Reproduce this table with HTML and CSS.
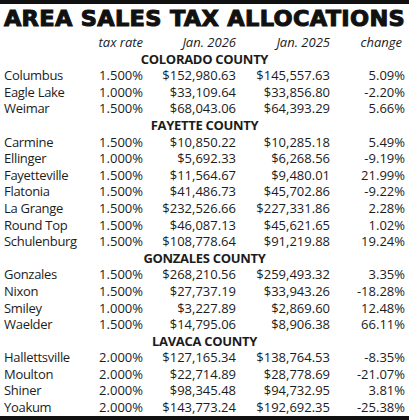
FILE: index.html
```html
<!DOCTYPE html>
<html>
<head>
<meta charset="utf-8">
<link rel="stylesheet" href="styles.css">
</head>
<body>
<div class="frame">
  <h1 class="title"><span class="title-text">AREA SALES TAX ALLOCATIONS</span></h1>
  <div class="table">
    <div class="row head"><span></span><span>tax rate</span><span>Jan. 2026</span><span>Jan. 2025</span><span>change</span></div>
    <div class="county">COLORADO COUNTY</div>
    <div class="row"><span>Columbus</span><span>1.500%</span><span>$152,980.63</span><span>$145,557.63</span><span>5.09%</span></div>
    <div class="row"><span>Eagle Lake</span><span>1.000%</span><span>$33,109.64</span><span>$33,856.80</span><span>-2.20%</span></div>
    <div class="row"><span>Weimar</span><span>1.500%</span><span>$68,043.06</span><span>$64,393.29</span><span>5.66%</span></div>
    <div class="county">FAYETTE COUNTY</div>
    <div class="row"><span>Carmine</span><span>1.500%</span><span>$10,850.22</span><span>$10,285.18</span><span>5.49%</span></div>
    <div class="row"><span>Ellinger</span><span>1.000%</span><span>$5,692.33</span><span>$6,268.56</span><span>-9.19%</span></div>
    <div class="row"><span>Fayetteville</span><span>1.500%</span><span>$11,564.67</span><span>$9,480.01</span><span>21.99%</span></div>
    <div class="row"><span>Flatonia</span><span>1.500%</span><span>$41,486.73</span><span>$45,702.86</span><span>-9.22%</span></div>
    <div class="row"><span>La Grange</span><span>1.500%</span><span>$232,526.66</span><span>$227,331.86</span><span>2.28%</span></div>
    <div class="row"><span>Round Top</span><span>1.500%</span><span>$46,087.13</span><span>$45,621.65</span><span>1.02%</span></div>
    <div class="row"><span>Schulenburg</span><span>1.500%</span><span>$108,778.64</span><span>$91,219.88</span><span>19.24%</span></div>
    <div class="county">GONZALES COUNTY</div>
    <div class="row"><span>Gonzales</span><span>1.500%</span><span>$268,210.56</span><span>$259,493.32</span><span>3.35%</span></div>
    <div class="row"><span>Nixon</span><span>1.500%</span><span>$27,737.19</span><span>$33,943.26</span><span>-18.28%</span></div>
    <div class="row"><span>Smiley</span><span>1.000%</span><span>$3,227.89</span><span>$2,869.60</span><span>12.48%</span></div>
    <div class="row"><span>Waelder</span><span>1.500%</span><span>$14,795.06</span><span>$8,906.38</span><span>66.11%</span></div>
    <div class="county">LAVACA COUNTY</div>
    <div class="row"><span>Hallettsville</span><span>2.000%</span><span>$127,165.34</span><span>$138,764.53</span><span>-8.35%</span></div>
    <div class="row"><span>Moulton</span><span>2.000%</span><span>$22,714.89</span><span>$28,778.69</span><span>-21.07%</span></div>
    <div class="row"><span>Shiner</span><span>2.000%</span><span>$98,345.48</span><span>$94,732.95</span><span>3.81%</span></div>
    <div class="row"><span>Yoakum</span><span>2.000%</span><span>$143,773.24</span><span>$192,692.35</span><span>-25.38%</span></div>
  </div>
</div>
</body>
</html>
```
FILE: styles.css
```css
html, body {
  margin: 0;
  padding: 0;
  background: #fff;
}
.frame {
  width: 409px;
  height: 420px;
  box-sizing: border-box;
  border-top: 4px solid #111;
  border-bottom: 4px solid #111;
  color: #1c1c1c;
  font-family: "Open Sans", "Liberation Sans", sans-serif;
  font-size: 13px;
}
.title {
  margin: 0;
  height: 30px;
  line-height: 31px;
  font-family: "DejaVu Sans", "Liberation Sans", sans-serif;
  font-weight: bold;
  font-size: 21px;
  color: #111;
  text-align: center;
  white-space: nowrap;
}
.title-text {
  display: inline-block;
  -webkit-text-stroke: 1px #111;
  letter-spacing: 0.3px;
  transform: scaleX(1.07);
}
.table {
  padding: 0 4px;
}
.row {
  display: grid;
  grid-template-columns: 86px 53px 93px 94px 75px;
  height: 16.6px;
  line-height: 16.6px;
  white-space: nowrap;
}
.row span {
  text-align: right;
}
.row span:first-child {
  text-align: left;
  letter-spacing: -0.3px;
}
.head {
  font-style: italic;
}
.head span:last-child {
  padding-right: 3px;
}
.county {
  height: 16.6px;
  line-height: 16.6px;
  text-align: center;
  font-weight: bold;
  letter-spacing: -0.3px;
}
```
